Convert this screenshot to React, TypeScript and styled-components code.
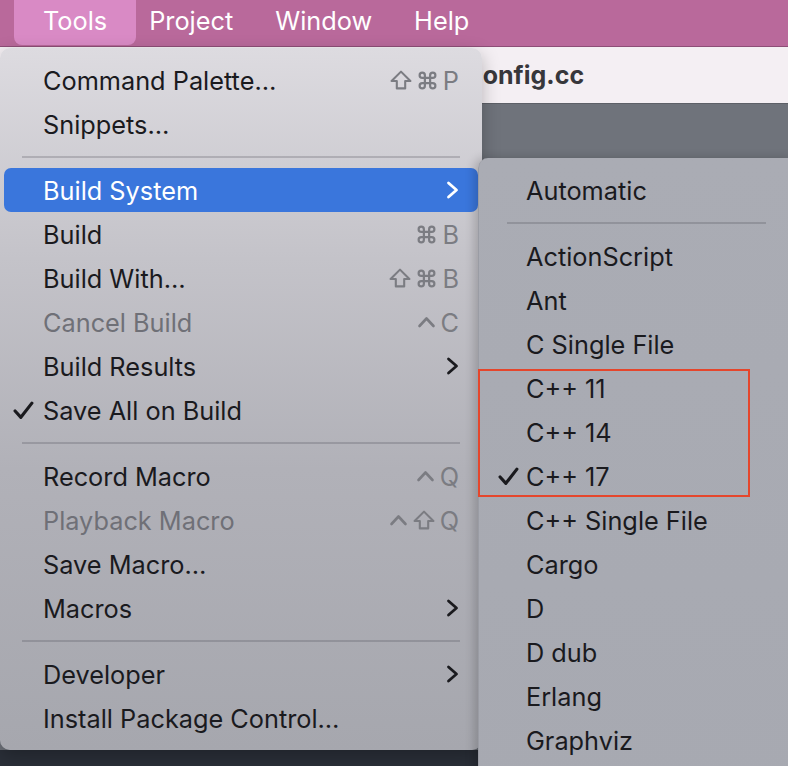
import React from "react";
import styled, { createGlobalStyle, css } from "styled-components";

const GlobalStyle = createGlobalStyle`
  * { box-sizing: border-box; }
  html, body { margin: 0; padding: 0; background: #2a2f38; }
  body { font-family: Inter, "Noto Sans", "Liberation Sans", sans-serif; }
`;

const Screen = styled.div`
  width: 788px;
  height: 766px;
  overflow: hidden;
  display: flex;
  flex-direction: column;
  background: #2a2f38;
`;

const MenuBar = styled.div`
  height: 47px;
  flex: none;
  display: flex;
  align-items: center;
  padding-left: 14px;
  background: #b9699b;
  border-bottom: 1px solid #8d4e77;
`;

const MenuTitle = styled.div<{ $active?: boolean }>`
  height: 100%;
  display: flex;
  align-items: center;
  padding: 0 21px 5px;
  font-size: 25.3px;
  color: #fff;
  ${(p) =>
    p.$active &&
    css`
      margin: -8px -8px 0 0;
      height: calc(100% + 6px);
      padding: 8px 29px 5px 29px;
      background: #d98ac5;
      border-radius: 8px;
    `}
`;

const Workspace = styled.div`
  position: relative;
  flex: 1;
  display: flex;
  flex-direction: column;
`;

const TabBar = styled.div`
  height: 57px;
  flex: none;
  display: flex;
  align-items: center;
  padding-left: 468px;
  background: #f4eff3;
  border-bottom: 1px solid #5d6067;
`;

const TabTitle = styled.span`
  font-size: 25px;
  font-weight: 700;
  color: #37373b;
`;

const Editor = styled.div`
  flex: 1;
  background: #6f737b;
`;

const StatusStrip = styled.div`
  height: 16px;
  flex: none;
  background: #2a2f38;
`;

const MainMenu = styled.div`
  position: absolute;
  top: 1px;
  left: 0;
  width: 482px;
  padding: 10px 0 10px;
  border-radius: 10px;
  background: linear-gradient(180deg, #dddbe0 0%, #c4c3c9 30%, #b1b1b8 60%, #a6a7ae 100%);
  box-shadow: 0 6px 18px rgba(0, 0, 0, 0.25);
`;

const SubMenu = styled.div`
  position: absolute;
  top: 111px;
  left: 478px;
  width: 316px;
  bottom: -30px;
  padding-top: 10px;
  border-radius: 10px 0 0 0;
  background: linear-gradient(180deg, #aaacb4 0%, #a7a9b1 100%);
  box-shadow: -4px 0 10px rgba(0, 0, 0, 0.18);
  border-left: 1px solid #9a9ca4;
`;

const Row = styled.div<{ $highlight?: boolean; $disabled?: boolean; $check: number }>`
  height: 44px;
  margin: 0 4px;
  display: grid;
  grid-template-columns: ${(p) => p.$check}px 1fr auto;
  align-items: center;
  padding-right: 19px;
  border-radius: 7px;
  font-size: 25.3px;
  color: ${(p) => (p.$disabled ? "#6f7077" : "#1a1a1e")};
  ${(p) =>
    p.$highlight &&
    css`
      background: #3a76dc;
      color: #fff;
    `}
`;

const CheckCell = styled.div<{ $offset: number }>`
  display: flex;
  align-items: center;
  padding-left: ${(p) => p.$offset}px;
  color: #1a1a1e;
`;

const Label = styled.span`
  white-space: nowrap;
`;

const Keys = styled.span<{ $tone?: string }>`
  display: flex;
  align-items: center;
  gap: 5px;
  color: ${(p) => p.$tone ?? "#7b7c82"};
  font-size: 25.3px;
`;

const Separator = styled.div<{ $inset: number }>`
  height: 22px;
  display: flex;
  align-items: center;
  margin: 0 ${(p) => p.$inset}px;
  &::after {
    content: "";
    flex: 1;
    height: 2px;
    background: rgba(60, 60, 70, 0.22);
  }
`;

const Highlighted = styled.div`
  position: relative;
  &::after {
    content: "";
    position: absolute;
    top: 3px;
    left: -1px;
    width: 268px;
    bottom: 1px;
    border: 2.5px solid #e5462c;
    pointer-events: none;
  }
`;

const CheckMark = () => (
  <svg width="21" height="19" viewBox="0 0 20 18" fill="none">
    <path d="M2 9.5 L7.5 15.5 L18 2" stroke="currentColor" strokeWidth="3" strokeLinecap="round" strokeLinejoin="round" />
  </svg>
);

const Chevron = () => (
  <svg width="13" height="18" viewBox="0 0 13 18" fill="none">
    <path d="M2.5 2 L10.5 9 L2.5 16" stroke="currentColor" strokeWidth="2.8" strokeLinecap="round" strokeLinejoin="round" />
  </svg>
);

const ShiftKey = () => (
  <svg width="22" height="20" viewBox="0 0 21 19" fill="none">
    <path d="M10.5 1.5 L19.5 10.5 H14.5 V17.5 H6.5 V10.5 H1.5 Z" stroke="currentColor" strokeWidth="2" strokeLinejoin="round" />
  </svg>
);

const CmdKey = () => (
  <svg width="21" height="21" viewBox="0 0 24 24" fill="none">
    <path
      d="M15 6v12a3 3 0 1 0 3-3H6a3 3 0 1 0 3 3V6a3 3 0 1 0-3 3h12a3 3 0 1 0-3-3"
      stroke="currentColor"
      strokeWidth="2.5"
      strokeLinecap="round"
      strokeLinejoin="round"
    />
  </svg>
);

const CtrlKey = () => (
  <svg width="19" height="14" viewBox="0 0 18 14" fill="none">
    <path d="M2 11 L9 3.5 L16 11" stroke="currentColor" strokeWidth="2.6" strokeLinecap="round" strokeLinejoin="round" />
  </svg>
);

type Key = "shift" | "cmd" | "ctrl" | string;

const renderKey = (k: Key, i: number) => {
  if (k === "shift") return <ShiftKey key={i} />;
  if (k === "cmd") return <CmdKey key={i} />;
  if (k === "ctrl") return <CtrlKey key={i} />;
  return <span key={i}>{k}</span>;
};

type Entry =
  | { sep: true }
  | { label: string; keys?: Key[]; sub?: boolean; disabled?: boolean; checked?: boolean; highlight?: boolean };

const toolsMenu: Entry[] = [
  { label: "Command Palette…", keys: ["shift", "cmd", "P"] },
  { label: "Snippets…" },
  { sep: true },
  { label: "Build System", sub: true, highlight: true },
  { label: "Build", keys: ["cmd", "B"] },
  { label: "Build With…", keys: ["shift", "cmd", "B"] },
  { label: "Cancel Build", keys: ["ctrl", "C"], disabled: true },
  { label: "Build Results", sub: true },
  { label: "Save All on Build", checked: true },
  { sep: true },
  { label: "Record Macro", keys: ["ctrl", "Q"] },
  { label: "Playback Macro", keys: ["ctrl", "shift", "Q"], disabled: true },
  { label: "Save Macro…" },
  { label: "Macros", sub: true },
  { sep: true },
  { label: "Developer", sub: true },
  { label: "Install Package Control…" },
];

const buildSystems = ["ActionScript", "Ant", "C Single File"];
const cppVersions = ["C++ 11", "C++ 14", "C++ 17"];
const moreSystems = ["C++ Single File", "Cargo", "D", "D dub", "Erlang", "Graphviz"];

export default function App() {
  return (
    <>
      <GlobalStyle />
      <Screen>
        <MenuBar>
          <MenuTitle $active>Tools</MenuTitle>
          <MenuTitle>Project</MenuTitle>
          <MenuTitle>Window</MenuTitle>
          <MenuTitle>Help</MenuTitle>
        </MenuBar>
        <Workspace>
          <TabBar>
            <TabTitle>config.cc</TabTitle>
          </TabBar>
          <Editor />
          <StatusStrip />

          <MainMenu>
            {toolsMenu.map((item, i) =>
              "sep" in item ? (
                <Separator key={i} $inset={22} />
              ) : (
                <Row key={i} $check={39} $highlight={item.highlight} $disabled={item.disabled}>
                  <CheckCell $offset={9}>{item.checked && <CheckMark />}</CheckCell>
                  <Label>{item.label}</Label>
                  {item.sub ? (
                    <Keys $tone={item.highlight ? "#fff" : "#1a1a1e"}>
                      <Chevron />
                    </Keys>
                  ) : (
                    <Keys>{item.keys?.map(renderKey)}</Keys>
                  )}
                </Row>
              )
            )}
          </MainMenu>

          <SubMenu>
            <Row $check={43}>
              <CheckCell $offset={15} />
              <Label>Automatic</Label>
            </Row>
            <Separator $inset={28} />
            {buildSystems.map((name) => (
              <Row key={name} $check={43}>
                <CheckCell $offset={15} />
                <Label>{name}</Label>
              </Row>
            ))}
            <Highlighted>
              {cppVersions.map((name) => (
                <Row key={name} $check={43}>
                  <CheckCell $offset={15}>{name === "C++ 17" && <CheckMark />}</CheckCell>
                  <Label>{name}</Label>
                </Row>
              ))}
            </Highlighted>
            {moreSystems.map((name) => (
              <Row key={name} $check={43}>
                <CheckCell $offset={15} />
                <Label>{name}</Label>
              </Row>
            ))}
          </SubMenu>
        </Workspace>
      </Screen>
    </>
  );
}
